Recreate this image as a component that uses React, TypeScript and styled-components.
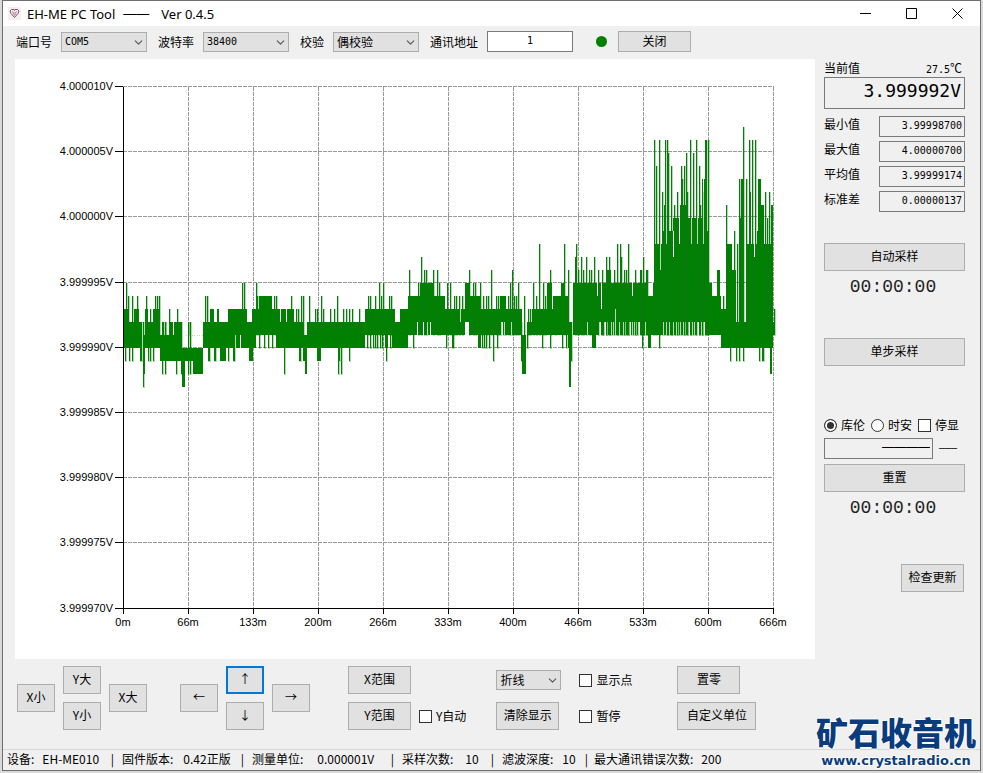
import { useState } from 'react'
import styled, { createGlobalStyle, css } from 'styled-components'
import { ChevronDown } from 'lucide-react'

const cjk = `"Noto Sans CJK SC", sans-serif`
const mono = `"DejaVu Sans Mono", "Noto Sans CJK SC", monospace`

const GlobalStyle = createGlobalStyle`
  * {
    box-sizing: border-box;
  }
  body {
    margin: 0;
    background: #d9d9d9;
    color: #000;
    font: 12px/16px ${cjk};
  }
  button, input, select {
    margin: 0;
    color: inherit;
    font: inherit;
  }
`

const Window = styled.div`
  position: relative;
  margin: 0 2px 2px;
  border: 1px solid #6e6e6e;
  background: #f0f0f0;
`

const TitleBar = styled.header`
  display: flex;
  align-items: center;
  height: 25px;
  padding-left: 5px;
  background: #fff;
`

const Title = styled.h1`
  flex: 1;
  display: flex;
  gap: 8px;
  margin: 0 0 0 6px;
  font: 13px/16px "Noto Sans", ${cjk};
`

const Dash = styled.span`
  font-family: "Liberation Sans", sans-serif;
`

const Version = styled.span`
  margin-left: 4px;
`

const CaptionButton = styled.button`
  display: flex;
  align-items: center;
  justify-content: center;
  width: 46px;
  height: 25px;
  padding: 0;
  border: none;
  background: none;
`

const Toolbar = styled.div`
  display: flex;
  align-items: center;
  gap: 11px;
  height: 33px;
  padding: 0 13px 2px;
`

const Field = styled.label`
  display: flex;
  align-items: center;
  gap: 9px;
  white-space: nowrap;
`

const SelectBox = styled.span<{ $width: number }>`
  position: relative;
  display: block;
  width: ${p => p.$width}px;
  >svg {
    position: absolute;
    right: 2px;
    top: 4px;
    pointer-events: none;
  }
`

const StyledSelect = styled.select<{ $mono?: boolean }>`
  display: block;
  appearance: none;
  width: 100%;
  height: 20px;
  padding: 0 3px;
  border: 1px solid #adadad;
  border-radius: 0;
  background: #e1e1e1;
  ${p => p.$mono && css`
    font: 10px/16px ${mono};
  `}
`

const TextBox = styled.input<{ $align?: string }>`
  width: 86px;
  height: 21px;
  padding: 0 2px 2px;
  border: 1px solid #7a7a7a;
  border-radius: 0;
  background: ${p => (p.readOnly ? '#f0f0f0' : '#fff')};
  font: 10px/16px ${mono};
  text-align: ${p => p.$align || 'right'};
`

const Lamp = styled.span`
  width: 11px;
  height: 11px;
  margin-left: 12px;
  border-radius: 50%;
  background: #008000;
`

const Button = styled.button<{ $width?: number; $height?: number; $active?: boolean }>`
  display: block;
  width: ${p => (p.$width ? `${p.$width}px` : '100%')};
  height: ${p => p.$height || 28}px;
  padding: 0 0 2px;
  border: ${p => (p.$active ? '2px solid #0078d7' : '1px solid #adadad')};
  background: #e1e1e1;
  white-space: nowrap;
`

const Main = styled.main`
  display: grid;
  grid-template-columns: minmax(0, 1fr) 141px;
  gap: 9px;
  padding: 0 15px 0 12px;
`

const ChartSvg = styled.svg`
  display: block;
  width: 100%;
  background: #fff;
  text {
    font: 11px "Liberation Sans", sans-serif;
  }
`

const Side = styled.aside`
  display: flex;
  flex-direction: column;
  padding-top: 1px;
`

const CurrentHead = styled.div`
  display: flex;
  justify-content: space-between;
  height: 17px;
  padding-right: 3px;
`

const Temperature = styled.span`
  >span {
    font: 10px/16px ${mono};
  }
`

const BigReading = styled.output`
  display: block;
  height: 32px;
  padding-right: 3px;
  border: 1px solid #7a7a7a;
  font: 18px/26px ${mono};
  text-align: right;
`

const Stats = styled.div`
  display: grid;
  gap: 4px;
  margin: 7px 0 31px;
`

const StatRow = styled.label`
  display: flex;
  justify-content: space-between;
`

const Timer = styled.time`
  display: block;
  padding-right: 3px;
  color: #222;
  font: 18px/32px "Liberation Mono", monospace;
  text-align: center;
`

const SampleGroup = styled.section<{ $gap: number }>`
  margin-bottom: ${p => p.$gap}px;
`

const ModeRow = styled.div`
  display: flex;
  justify-content: space-between;
  margin-bottom: 5px;
  padding-right: 6px;
`

const Check = styled.label`
  display: flex;
  align-items: center;
  gap: 4px;
  white-space: nowrap;
`

const Tick = styled.input`
  appearance: none;
  flex: none;
  width: 13px;
  height: 13px;
  border: 1px solid #333;
  border-radius: ${p => (p.type === 'radio' ? '50%' : '0')};
  background: #fff;
  &:checked {
    background: #333;
    box-shadow: inset 0 0 0 2px #fff;
  }
`

const ChargeRow = styled.div`
  display: flex;
  align-items: center;
  gap: 6px;
  margin-bottom: 5px;
  font: 10px/16px "Liberation Mono", monospace;
  >input {
    width: 109px;
    padding-bottom: 4px;
    font: 12px/16px "Liberation Sans", sans-serif;
  }
`

const UpdateRow = styled.div`
  display: flex;
  justify-content: flex-end;
  padding-right: 1px;
`

const Controls = styled.div`
  display: flex;
  align-items: flex-start;
  height: 90px;
  padding: 7px 14px 0;
`

const Pad = styled.div`
  display: grid;
  grid-template: 28px 28px / repeat(3, 38px);
  gap: 8px;
  margin-right: 33px;
  align-items: center;
  >:nth-child(1), >:nth-child(4) {
    grid-row: 1 / 3;
  }
  >:nth-child(3) {
    grid-area: 2 / 2;
  }
`

const PairGrid = styled.div<{ $left?: number; $gap?: number }>`
  display: grid;
  grid-template-rows: 28px 28px;
  grid-template-columns: auto auto;
  gap: 8px ${p => p.$gap || 8}px;
  margin-left: ${p => p.$left || 0}px;
  align-items: center;
`

const StatusBar = styled.footer`
  display: flex;
  align-items: center;
  height: 21px;
  padding: 0 0 2px 4px;
  border-top: 1px solid #d7d7d7;
  white-space: nowrap;
`

const StatusItem = styled.span<{ $width: number; $gap: number }>`
  display: flex;
  width: ${p => p.$width}px;
  gap: ${p => p.$gap}px;
`

const Divider = styled.span`
  margin-left: auto;
  padding-right: 8px;
`

const Watermark = styled.a`
  position: absolute;
  right: 4px;
  bottom: 0;
  color: #0a3c7d;
  text-decoration: none;
  text-align: center;
  text-shadow: 1px 0 #fff, -1px 0 #fff, 0 1px #fff, 0 -1px #fff;
`

const MarkName = styled.strong`
  display: block;
  font: 900 32px/42px ${cjk};
`

const MarkUrl = styled.span`
  display: block;
  font: bold 13px/18px "DejaVu Sans", sans-serif;
`

// chart geometry: one level is 1 µV, level 0 is 3.999990V
const LEFT = 108
const ZERO = 289
const levelY = (level: number) => ZERO - level * 13

const yLabels = ['4.000010V', '4.000005V', '4.000000V', '3.999995V', '3.999990V', '3.999985V', '3.999980V', '3.999975V', '3.999970V']
const xLabels = ['0m', '66m', '133m', '200m', '266m', '333m', '400m', '466m', '533m', '600m', '666m']

// [from, to, high, low]
const bands = [
  [0, 19, 2, 0], [1, 6, 3, 0], [11, 16, 3, 0], [20, 22, 1, -2], [22, 37, 2, 0], [22, 25, 3, 0], [30, 37, 3, 0],
  [37, 59, 1, -1], [46, 50, 2, 0], [51, 53, 2, 0], [54, 59, 2, 0], [59, 62, 0, -3], [62, 80, 0, -1], [70, 80, 0, -2],
  [80, 105, 2, 0], [87, 91, 3, 0], [94, 96, 3, 0], [97, 103, 0, -1], [105, 124, 3, 0], [124, 130, 2, 0], [126, 130, 0, -1],
  [130, 133, 3, 0], [133, 153, 3, 1], [137, 149, 4, 1], [153, 171, 3, 0], [171, 180, 2, 0], [180, 184, 1, -1],
  [182, 184, 0, -2], [184, 242, 2, 0], [194, 198, 0, -1], [242, 272, 3, 1], [262, 265, 3, 0], [269, 284, 2, 0], [277, 285, 3, 0],
  [285, 297, 4, 1], [297, 310, 5, 1], [310, 322, 4, 1], [322, 342, 3, 1], [342, 346, 5, 2], [346, 357, 4, 1],
  [355, 358, 1, 0], [357, 377, 3, 1], [377, 383, 4, 2], [383, 399, 3, 1], [399, 403, 1, -2], [403, 409, 2, 1],
  [409, 430, 3, 1], [424, 429, 5, 1], [430, 445, 4, 1], [438, 442, 5, 1], [445, 449, 2, 0], [446, 448, 0, -3],
  [450, 457, 5, 1], [457, 525, 5, 2], [457, 476, 2, 1], [469, 473, 1, 0], [483, 488, 6, 2], [525, 531, 4, 1],
  [525, 528, 1, 0], [531, 540, 8, 1], [540, 550, 9, 2], [550, 557, 10, 2], [557, 565, 11, 2], [565, 579, 10, 2],
  [579, 586, 13, 2], [586, 590, 5, 1], [590, 598, 4, 1], [594, 597, 6, 1], [598, 603, 3, 0], [603, 610, 8, 0],
  [610, 613, 6, 0], [613, 616, 2, 0], [616, 621, 10, 0], [621, 623, 2, 0], [623, 650, 8, 0], [626, 628, 12, 0],
  [635, 638, 13, 0], [638, 641, 11, 0], [647, 649, 0, -2], [648, 650, 11, 0], [649, 652, 2, 1],
]

// [x, level] of single samples that stand above or below their band
const peaks = [
  [3, 5], [5, 4], [9, 4], [14, 4], [23, 4], [27, 3], [32, 4], [34, 4], [36, 4], [40, 2], [42, 2], [46, 3], [54, 3], [63, 1],
  [65, 2], [69, 1], [71, 1], [74, 1], [76, 1], [79, 1], [82, 4], [84, 4], [119, 5], [121, 5], [129, 3], [133, 5], [134, 4],
  [136, 4], [151, 4], [153, 4], [168, 4], [173, 3], [175, 3], [178, 4], [180, 4], [186, 4], [192, 3], [194, 3], [198, 4],
  [200, 3], [207, 3], [211, 3], [214, 4], [220, 3], [223, 3], [226, 3], [229, 3], [236, 3], [245, 4], [247, 4], [252, 4],
  [256, 5], [258, 4], [260, 5], [266, 4], [268, 4], [286, 6], [295, 5], [298, 7], [301, 6], [303, 6], [310, 6], [314, 6],
  [316, 5], [324, 5], [327, 5], [331, 4], [333, 4], [336, 4], [339, 4], [346, 6], [350, 5], [352, 5], [357, 5], [360, 4],
  [363, 4], [365, 4], [368, 6], [373, 4], [375, 4], [385, 4], [387, 5], [389, 6], [391, 4], [393, 4], [395, 5], [401, 4],
  [405, 3], [407, 3], [410, 5], [413, 4], [416, 8], [420, 5], [422, 4], [427, 6], [432, 4], [441, 8], [445, 6], [452, 7],
  [453, 8], [455, 6], [458, 7], [460, 6], [463, 7], [466, 6], [468, 6], [471, 7], [475, 6], [479, 6], [483, 7], [486, 7],
  [491, 6], [494, 8], [497, 8], [498, 7], [501, 6], [503, 6], [505, 8], [512, 6], [517, 6], [518, 6], [520, 7], [523, 6],
  [524, 6], [530, 5], [531, 16], [533, 14], [536, 16], [539, 12], [541, 11], [542, 16], [544, 16], [545, 15], [548, 14],
  [551, 11], [554, 12], [558, 14], [559, 13], [561, 14], [563, 15], [564, 12], [567, 16], [570, 15], [573, 16], [576, 14],
  [577, 11], [579, 12], [582, 16], [583, 16], [585, 16], [600, 4], [603, 11], [611, 9], [614, 8], [616, 13], [618, 13],
  [620, 17], [619, 13], [623, 13], [626, 16], [629, 16], [632, 16], [634, 9], [642, 12], [644, 10], [646, 12], [651, 3],
]
const dips = [
  [2, -1], [6, -1], [9, -1], [17, -1], [18, -1], [20, -3], [25, -1], [27, -1], [30, -1], [39, -2], [42, -2], [53, -2],
  [58, -2], [65, -2], [67, -2], [85, -1], [86, -1], [91, -1], [92, -1], [105, -1], [110, -1], [111, -1], [136, 0], [141, 0],
  [145, 0], [149, 0], [161, -2], [176, -1], [177, -1], [215, -2], [216, -1], [218, -2], [226, -1], [244, 0], [247, 0],
  [250, 0], [252, 0], [254, 0], [257, 0], [259, 0], [263, -1], [267, 0], [290, 0], [323, 0], [329, 0], [330, 0], [359, 0],
  [361, 0], [363, 0], [366, 0], [370, -1], [374, 0], [377, 1], [380, 1], [382, 1], [398, -1], [404, 0], [419, 0], [427, 0],
  [439, 0], [443, 0], [448, -1], [478, 1], [480, 1], [483, 1], [485, 1], [487, 1], [489, 1], [493, 1], [495, 1], [499, 1],
  [501, 1], [504, 1], [505, 1], [508, 1], [510, 1], [512, 1], [514, 1], [518, 1], [519, 0], [521, 1], [523, 1], [536, 0],
  [544, 1], [547, 1], [549, 1], [552, 1], [554, 1], [556, 1], [561, 1], [564, 1], [567, 1], [568, 1], [572, 1], [576, 1],
  [579, 1], [582, 1], [584, 1], [607, -1], [613, -1], [616, -1], [620, -1], [636, -1], [639, -1], [640, -1],
]
// [x, high, low] of hairline gaps inside the bands
const slits = [
  [19, 2, 0], [29, 3, 2], [39, 1, 0], [112, 1, 0], [117, 1, 0], [157, 3, 2], [163, 3, 2], [294, 2, 1], [300, 2, 1],
  [304, 2, 1], [307, 2, 1], [337, 3, 2], [455, 2, 1], [460, 2, 1], [464, 2, 1], [474, 5, 4], [478, 5, 3], [492, 3, 2],
  [509, 5, 4], [520, 5, 4], [534, 10, 8], [537, 8, 6], [543, 10, 8], [550, 9, 7], [556, 10, 8], [568, 10, 8], [574, 10, 8],
  [580, 13, 8], [584, 13, 9], [609, 8, 6], [631, 8, 7], [388, 2, 1], [403, 3, 1], [589, 5, 4],
]

const bandPath = bands.map(([a, b, hi, lo]) => `M${LEFT + a} ${levelY(hi)}H${LEFT + b}V${levelY(lo)}H${LEFT + a}Z`).join('')
const peakPath = peaks.map(([x, l]) => `M${LEFT + x} ${levelY(l)}h1V${levelY(1)}h-1Z`).join('')
const dipPath = dips.map(([x, l]) => `M${LEFT + x} ${levelY(2)}h1V${levelY(l)}h-1Z`).join('')
const slitPath = slits.map(([x, hi, lo]) => `M${LEFT + x} ${levelY(hi)}h1V${levelY(lo)}h-1Z`).join('')

const Chart = () => (
  <ChartSvg viewBox="0 0 800 600" role="img" aria-label="电压">
    <g stroke="#999" strokeDasharray="4 1" shapeRendering="crispEdges">
      {yLabels.slice(0, -1).map((label, i) => (
        <line key={label} x1={LEFT} x2={LEFT + 651} y1={27.5 + i * 65.2} y2={27.5 + i * 65.2}/>
      ))}
      {xLabels.slice(1).map((label, i) => (
        <line key={label} x1={LEFT + (i + 1) * 65} x2={LEFT + (i + 1) * 65} y1="28" y2="549"/>
      ))}
    </g>
    <g shapeRendering="crispEdges">
      <path d={bandPath} fill="#008000"/>
      <path d={slitPath} fill="#fff"/>
      {/* single samples are drawn with a faint edge so that they read as full strokes */}
      <path d={peakPath} fill="#0b7a12" stroke="#008000" strokeOpacity=".3" strokeWidth="1"/>
      <path d={dipPath} fill="#008000" stroke="#008000" strokeOpacity=".3" strokeWidth="1"/>
    </g>
    <path d={`M${LEFT} 28V549H${LEFT + 651}`} fill="none" stroke="#000" shapeRendering="crispEdges"/>
    {yLabels.map((label, i) => (
      <g key={label}>
        <line x1={LEFT - 8} x2={LEFT} y1={27.5 + i * 65.2} y2={27.5 + i * 65.2} stroke="#000" shapeRendering="crispEdges"/>
        <text x="98" y={31 + i * 65.2} textAnchor="end">{label}</text>
      </g>
    ))}
    {xLabels.map((label, i) => (
      <g key={label}>
        <line x1={LEFT + i * 65} x2={LEFT + i * 65} y1="549" y2="555" stroke="#000" shapeRendering="crispEdges"/>
        <text x={LEFT + i * 65} y="567" textAnchor="middle">{label}</text>
      </g>
    ))}
  </ChartSvg>
)

type SelectProps = { width: number; mono?: boolean; options: string[]; label?: string }

const Select = ({ width, mono, options, label }: SelectProps) => (
  <SelectBox $width={width}>
    <StyledSelect $mono={mono} aria-label={label}>
      {options.map(option => <option key={option}>{option}</option>)}
    </StyledSelect>
    <ChevronDown size={13} strokeWidth={2} color="#555"/>
  </SelectBox>
)

const stats = [
  ['最小值', '3.99998700'],
  ['最大值', '4.00000700'],
  ['平均值', '3.99999174'],
  ['标准差', '0.00000137'],
]

const statusItems = [
  { label: '设备:', value: 'EH-ME010', width: 115, gap: 8 },
  { label: '固件版本:', value: '0.42正版', width: 130, gap: 10 },
  { label: '测量单位:', value: '0.000001V', width: 150, gap: 14 },
  { label: '采样次数:', value: '10', width: 100, gap: 12 },
  { label: '滤波深度:', value: '10', width: 92, gap: 9 },
  { label: '最大通讯错误次数:', value: '200', width: 140, gap: 8 },
]

const App = () => {
  const [address, setAddress] = useState('1')
  const [mode, setMode] = useState('库伦')

  return (
    <>
      <GlobalStyle/>
      <Window>
        <TitleBar>
          <svg width="13" height="13" viewBox="0 0 13 13" fill="none" stroke="#5b3040">
            <path d="M0 0h13v13H0z" fill="#f8edf1" stroke="none"/>
            <path d="M2 4l1.500-1.500h2.500l.5 1 .5-1h2.500L11 4l-1 2.500-3.500 4L3 6.500z" strokeWidth=".8"/>
            <path d="M4 4.500l2.500 1.500L9 4.500M5 6l1.500 2.500L8 6" stroke="#a06078" strokeWidth=".7"/>
          </svg>
          <Title>
            <span>EH-ME PC Tool</span>
            <Dash>——</Dash>
            <Version>Ver 0.4.5</Version>
          </Title>
          <CaptionButton aria-label="最小化">
            <svg width="11" height="11"><path d="M0 5.500h11" stroke="#000"/></svg>
          </CaptionButton>
          <CaptionButton aria-label="最大化">
            <svg width="11" height="11"><path d="M.5 .5h10v10H.5z" fill="none" stroke="#000"/></svg>
          </CaptionButton>
          <CaptionButton aria-label="关闭窗口">
            <svg width="11" height="11"><path d="M.5 .5l10 10M10.500 .5l-10 10" stroke="#000"/></svg>
          </CaptionButton>
        </TitleBar>

        <Toolbar>
          <Field>端口号<Select width={86} mono options={['COM5']}/></Field>
          <Field>波特率<Select width={86} mono options={['38400']}/></Field>
          <Field>校验<Select width={86} options={['偶校验']}/></Field>
          <Field>
            通讯地址
            <TextBox $align="center" value={address} onChange={event => setAddress(event.target.value)}/>
          </Field>
          <Lamp/>
          <Button $width={73} $height={21}>关闭</Button>
        </Toolbar>

        <Main>
          <Chart/>
          <Side>
            <CurrentHead>
              <span>当前值</span>
              <Temperature><span>27.5</span>℃</Temperature>
            </CurrentHead>
            <BigReading>3.999992V</BigReading>
            <Stats>
              {stats.map(([label, value]) => (
                <StatRow key={label}>{label}<TextBox readOnly value={value}/></StatRow>
              ))}
            </Stats>
            <SampleGroup $gap={35}>
              <Button>自动采样</Button>
              <Timer>00:00:00</Timer>
            </SampleGroup>
            <SampleGroup $gap={51}>
              <Button>单步采样</Button>
            </SampleGroup>
            <ModeRow>
              {['库伦', '时安'].map(name => (
                <Check key={name}>
                  <Tick type="radio" name="mode" checked={mode === name} onChange={() => setMode(name)}/>
                  {name}
                </Check>
              ))}
              <Check><Tick type="checkbox"/>停显</Check>
            </ModeRow>
            <ChargeRow>
              <TextBox readOnly aria-label="电量" value="————"/>
              <span>———</span>
            </ChargeRow>
            <SampleGroup $gap={40}>
              <Button>重置</Button>
              <Timer>00:00:00</Timer>
            </SampleGroup>
            <UpdateRow>
              <Button $width={63}>检查更新</Button>
            </UpdateRow>
          </Side>
        </Main>

        <Controls>
          <Pad>
            <Button>X小</Button>
            <Button>Y大</Button>
            <Button>Y小</Button>
            <Button>X大</Button>
          </Pad>
          <Pad>
            <Button>←</Button>
            <Button $active>↑</Button>
            <Button>↓</Button>
            <Button>→</Button>
          </Pad>
          <PairGrid $left={5}>
            <Button $width={63}>X范围</Button>
            <span/>
            <Button $width={63}>Y范围</Button>
            <Check><Tick type="checkbox"/>Y自动</Check>
          </PairGrid>
          <PairGrid $left={30} $gap={18}>
            <Select width={65} label="线型" options={['折线']}/>
            <Check><Tick type="checkbox"/>显示点</Check>
            <Button $width={63}>清除显示</Button>
            <Check><Tick type="checkbox"/>暂停</Check>
          </PairGrid>
          <PairGrid $left={45}>
            <Button $width={63}>置零</Button>
            <span/>
            <Button $width={79}>自定义单位</Button>
          </PairGrid>
        </Controls>

        <StatusBar>
          {statusItems.map(({ label, value, width, gap }, i) => (
            <StatusItem key={label} $width={width} $gap={gap}>
              <span>{label}</span>
              <span>{value}</span>
              {i < statusItems.length - 1 && <Divider>|</Divider>}
            </StatusItem>
          ))}
        </StatusBar>

        <Watermark href="#">
          <MarkName>矿石收音机</MarkName>
          <MarkUrl>www.crystalradio.cn</MarkUrl>
        </Watermark>
      </Window>
    </>
  )
}

export default App
